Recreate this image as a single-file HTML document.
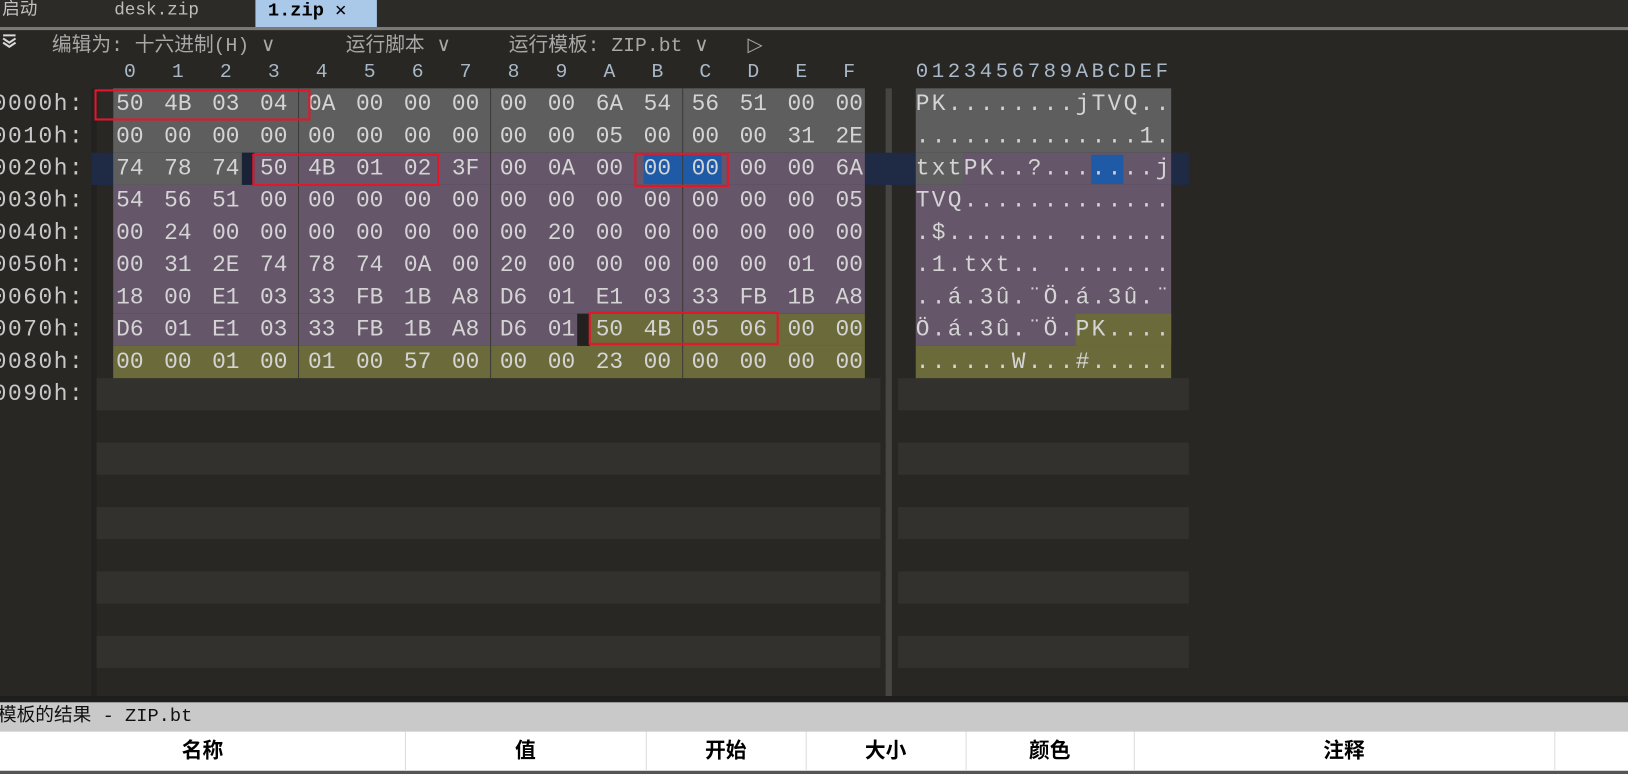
<!DOCTYPE html>
<html><head><meta charset="utf-8"><style>
html,body{margin:0;padding:0;width:1628px;height:774px;overflow:hidden;background:#282723;}
#s{position:absolute;left:0;top:0;width:1568px;height:745px;transform:scale(1.03827,1.0389);transform-origin:0 0;background:#282723;font-family:"Liberation Mono","Noto Sans CJK SC",monospace;}
.a{position:absolute;}
.mono{font-family:"Liberation Mono",monospace;font-size:22px;color:#d4d4d4;}
.row{position:absolute;left:102px;height:31px;line-height:31px;white-space:nowrap;}
.row span{display:inline-block;width:46.2px;text-align:center;}
.asc{position:absolute;left:882px;height:31px;line-height:31px;letter-spacing:2.2px;white-space:pre;}
.off{position:absolute;left:-7px;height:31px;line-height:31px;letter-spacing:1.5px;color:#c8c8c8;}
.red{position:absolute;border:2.5px solid #e5162a;box-sizing:border-box;}
.cj{font-family:"Liberation Mono","Noto Sans CJK SC",monospace;}
.tb{position:absolute;top:30px;font-size:19px;line-height:26px;color:#a8a8a8;white-space:pre;font-family:"Liberation Mono","Noto Sans CJK SC",monospace;}
</style></head><body><div id="s">
<!-- tab bar -->
<div class="a" style="left:0;top:0;width:1568px;height:26px;background:#2c2b27"></div>
<div class="a cj" style="left:2px;top:0;font-size:17px;line-height:22px;color:#c0c0c0">启动</div>
<div class="a mono" style="left:110px;top:0;font-size:17px;line-height:22px;color:#bdbdbd">desk.zip</div>
<div class="a" style="left:246px;top:0;width:117px;height:27px;background:#aac8e8"></div>
<div class="a mono" style="left:258px;top:0;font-size:18px;line-height:22px;color:#000;font-weight:bold">1.zip ✕</div>
<div class="a" style="left:0;top:26px;width:1568px;height:3px;background:#7a7a78"></div>
<!-- toolbar -->
<svg class="a" style="left:2px;top:33px" width="14" height="14" viewBox="0 0 14 14"><path d="M1 1h12M1 4l6 4 6-4M1 8l6 4 6-4" stroke="#d8d8d8" stroke-width="2" fill="none"/></svg>
<div class="tb" style="left:50px">编辑为: 十六进制(H) <span style="font-family:'DejaVu Sans'">∨</span></div>
<div class="tb" style="left:333px">运行脚本 <span style="font-family:'DejaVu Sans'">∨</span></div>
<div class="tb" style="left:490px">运行模板: ZIP.bt <span style="font-family:'DejaVu Sans'">∨</span></div>
<div class="tb" style="left:720px;font-family:'DejaVu Sans'">▷</div>
<!-- column header -->
<div class="row mono" style="top:54px;color:#a9b8c8;font-size:19px"><span>0</span><span>1</span><span>2</span><span>3</span><span>4</span><span>5</span><span>6</span><span>7</span><span>8</span><span>9</span><span>A</span><span>B</span><span>C</span><span>D</span><span>E</span><span>F</span></div>
<div class="asc mono" style="top:54px;color:#a9b8c8;font-size:20px;letter-spacing:3.4px">0123456789ABCDEF</div>
<!-- gutter / dividers -->
<div class="a" style="left:88px;top:85px;width:5px;height:585px;background:#222120"></div>
<div class="a" style="left:853px;top:85px;width:6px;height:585px;background:#454542"></div>
<!-- stripes -->
<div class="a" style="left:93px;top:364px;width:755px;height:31px;background:#32312d"></div>
<div class="a" style="left:865px;top:364px;width:280px;height:31px;background:#32312d"></div>
<div class="a" style="left:93px;top:426px;width:755px;height:31px;background:#32312d"></div>
<div class="a" style="left:865px;top:426px;width:280px;height:31px;background:#32312d"></div>
<div class="a" style="left:93px;top:488px;width:755px;height:31px;background:#32312d"></div>
<div class="a" style="left:865px;top:488px;width:280px;height:31px;background:#32312d"></div>
<div class="a" style="left:93px;top:550px;width:755px;height:31px;background:#32312d"></div>
<div class="a" style="left:865px;top:550px;width:280px;height:31px;background:#32312d"></div>
<div class="a" style="left:93px;top:612px;width:755px;height:31px;background:#32312d"></div>
<div class="a" style="left:865px;top:612px;width:280px;height:31px;background:#32312d"></div>
<!-- row 2 band -->
<div class="a" style="left:88px;top:147px;width:1057px;height:31px;background:#1f2a45"></div>
<!-- hex backgrounds -->
<div class="a" style="left:109px;top:85px;width:724px;height:62px;background:#5e5e5e"></div>
<div class="a" style="left:96px;top:88px;width:13px;height:26px;background:#2a2926"></div>
<div class="a" style="left:109px;top:147px;width:124px;height:31px;background:#5e5e5e"></div>
<div class="a" style="left:233px;top:147px;width:12px;height:31px;background:#1a2238"></div>
<div class="a" style="left:245px;top:147px;width:588px;height:31px;background:#65566a"></div>
<div class="a" style="left:109px;top:178px;width:724px;height:124px;background:#65566a"></div>
<div class="a" style="left:109px;top:302px;width:447px;height:31px;background:#65566a"></div>
<div class="a" style="left:556px;top:302px;width:12px;height:31px;background:#222120"></div>
<div class="a" style="left:568px;top:302px;width:265px;height:31px;background:#6b6a3a"></div>
<div class="a" style="left:109px;top:333px;width:724px;height:31px;background:#6b6a3a"></div>
<div class="a" style="left:620px;top:149px;width:75px;height:28px;background:#1f5aa6"></div>
<div class="a" style="left:287px;top:85px;width:1px;height:279px;background:#3c3b38"></div>
<div class="a" style="left:472px;top:85px;width:1px;height:279px;background:#3c3b38"></div>
<div class="a" style="left:657px;top:85px;width:1px;height:279px;background:#3c3b38"></div>
<!-- ascii backgrounds -->
<div class="a" style="left:882px;top:85px;width:246px;height:62px;background:#5e5e5e"></div>
<div class="a" style="left:882px;top:147px;width:46px;height:31px;background:#5e5e5e"></div>
<div class="a" style="left:928px;top:147px;width:200px;height:31px;background:#65566a"></div>
<div class="a" style="left:882px;top:178px;width:246px;height:155px;background:#65566a"></div>
<div class="a" style="left:1036px;top:302px;width:92px;height:31px;background:#6b6a3a"></div>
<div class="a" style="left:882px;top:333px;width:246px;height:31px;background:#6b6a3a"></div>
<div class="a" style="left:1051px;top:149px;width:31px;height:28px;background:#1f5aa6"></div>
<!-- offsets -->
<div class="off mono" style="top:85px">0000h:</div>
<div class="off mono" style="top:116px">0010h:</div>
<div class="off mono" style="top:147px">0020h:</div>
<div class="off mono" style="top:178px">0030h:</div>
<div class="off mono" style="top:209px">0040h:</div>
<div class="off mono" style="top:240px">0050h:</div>
<div class="off mono" style="top:271px">0060h:</div>
<div class="off mono" style="top:302px">0070h:</div>
<div class="off mono" style="top:333px">0080h:</div>
<div class="off mono" style="top:364px">0090h:</div>
<!-- hex -->
<div class="row mono" style="top:85px"><span>50</span><span>4B</span><span>03</span><span>04</span><span>0A</span><span>00</span><span>00</span><span>00</span><span>00</span><span>00</span><span>6A</span><span>54</span><span>56</span><span>51</span><span>00</span><span>00</span></div>
<div class="row mono" style="top:116px"><span>00</span><span>00</span><span>00</span><span>00</span><span>00</span><span>00</span><span>00</span><span>00</span><span>00</span><span>00</span><span>05</span><span>00</span><span>00</span><span>00</span><span>31</span><span>2E</span></div>
<div class="row mono" style="top:147px"><span>74</span><span>78</span><span>74</span><span>50</span><span>4B</span><span>01</span><span>02</span><span>3F</span><span>00</span><span>0A</span><span>00</span><span>00</span><span>00</span><span>00</span><span>00</span><span>6A</span></div>
<div class="row mono" style="top:178px"><span>54</span><span>56</span><span>51</span><span>00</span><span>00</span><span>00</span><span>00</span><span>00</span><span>00</span><span>00</span><span>00</span><span>00</span><span>00</span><span>00</span><span>00</span><span>05</span></div>
<div class="row mono" style="top:209px"><span>00</span><span>24</span><span>00</span><span>00</span><span>00</span><span>00</span><span>00</span><span>00</span><span>00</span><span>20</span><span>00</span><span>00</span><span>00</span><span>00</span><span>00</span><span>00</span></div>
<div class="row mono" style="top:240px"><span>00</span><span>31</span><span>2E</span><span>74</span><span>78</span><span>74</span><span>0A</span><span>00</span><span>20</span><span>00</span><span>00</span><span>00</span><span>00</span><span>00</span><span>01</span><span>00</span></div>
<div class="row mono" style="top:271px"><span>18</span><span>00</span><span>E1</span><span>03</span><span>33</span><span>FB</span><span>1B</span><span>A8</span><span>D6</span><span>01</span><span>E1</span><span>03</span><span>33</span><span>FB</span><span>1B</span><span>A8</span></div>
<div class="row mono" style="top:302px"><span>D6</span><span>01</span><span>E1</span><span>03</span><span>33</span><span>FB</span><span>1B</span><span>A8</span><span>D6</span><span>01</span><span>50</span><span>4B</span><span>05</span><span>06</span><span>00</span><span>00</span></div>
<div class="row mono" style="top:333px"><span>00</span><span>00</span><span>01</span><span>00</span><span>01</span><span>00</span><span>57</span><span>00</span><span>00</span><span>00</span><span>23</span><span>00</span><span>00</span><span>00</span><span>00</span><span>00</span></div>
<!-- ascii -->
<div class="asc mono" style="top:85px">PK........jTVQ..</div>
<div class="asc mono" style="top:116px">..............1.</div>
<div class="asc mono" style="top:147px">txtPK..?.......j</div>
<div class="asc mono" style="top:178px">TVQ.............</div>
<div class="asc mono" style="top:209px">.$....... ......</div>
<div class="asc mono" style="top:240px">.1.txt.. .......</div>
<div class="asc mono" style="top:271px">..á.3û.¨Ö.á.3û.¨</div>
<div class="asc mono" style="top:302px">Ö.á.3û.¨Ö.PK....</div>
<div class="asc mono" style="top:333px">......W...#.....</div>
<!-- red boxes -->
<div class="red" style="left:91px;top:86px;width:208px;height:30px"></div>
<div class="red" style="left:243px;top:148px;width:180px;height:31px"></div>
<div class="red" style="left:611px;top:147px;width:91px;height:33px"></div>
<div class="red" style="left:567px;top:300px;width:183px;height:32px"></div>
<!-- bottom -->
<div class="a" style="left:0;top:670px;width:1568px;height:6px;background:#1e1e1c"></div>
<div class="a" style="left:0;top:676px;width:1568px;height:28px;background:#c9c9c9"></div>
<div class="a cj" style="left:-2px;top:676px;font-size:18px;line-height:28px;color:#111">模板的结果 - ZIP.bt</div>
<div class="a" style="left:0;top:704px;width:1568px;height:38px;background:#fff"></div>
<div class="a" style="left:0;top:742px;width:1568px;height:3px;background:#555"></div>
<div class="a" style="left:0;top:704px;width:1568px;height:38px;font-size:20px;line-height:38px;font-weight:bold;color:#000;font-family:'Liberation Sans','Noto Sans CJK SC',sans-serif">
<div class="a" style="left:0;width:390px;text-align:center;border-right:1px solid #ddd;height:38px">名称</div>
<div class="a" style="left:390px;width:232px;text-align:center;border-right:1px solid #ddd;height:38px">值</div>
<div class="a" style="left:622px;width:154px;text-align:center;border-right:1px solid #ddd;height:38px">开始</div>
<div class="a" style="left:776px;width:154px;text-align:center;border-right:1px solid #ddd;height:38px">大小</div>
<div class="a" style="left:930px;width:162px;text-align:center;border-right:1px solid #ddd;height:38px">颜色</div>
<div class="a" style="left:1092px;width:405px;text-align:center;border-right:1px solid #ddd;height:38px">注释</div>
</div>
</div></body></html>
